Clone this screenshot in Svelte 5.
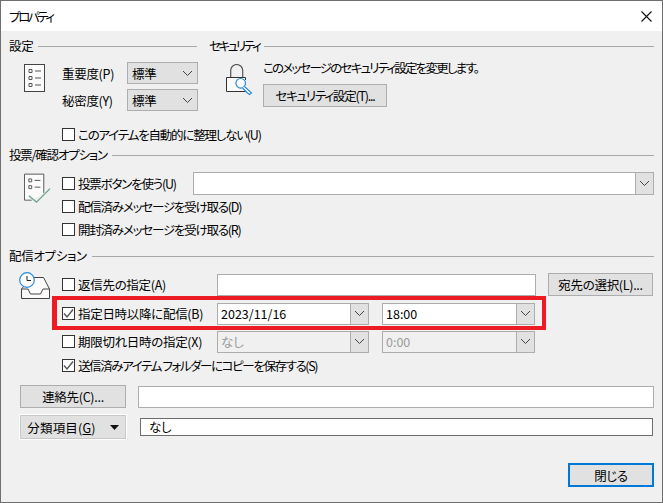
<script>
  let importance = "標準";
  let secrecy = "標準";
  let date = "2023/11/16";
  let time = "18:00";
</script>

{#snippet chevron()}
  <svg class="chev" width="11" height="7" viewBox="0 0 11 7">
    <path d="M1 1 L5.5 5.5 L10 1" fill="none" stroke="#444" stroke-width="1" />
  </svg>
{/snippet}

{#snippet checkbox(label, checked, tight)}
  <span class="check" class:on={checked}>
    <span class="box">
      {#if checked}
        <svg width="11" height="11" viewBox="0 0 11 11">
          <path d="M1 5.5 L4 9 L10 1.5" fill="none" stroke="#555" stroke-width="1.4" />
        </svg>
      {/if}
    </span>
    <span class="lbl {tight}">{label}</span>
  </span>
{/snippet}

{#snippet combo(text, width, disabled)}
  <div class="combo" class:disabled style="width:{width}px">
    <span class="combo-text">{text}</span>
    <span class="combo-arrow">{@render chevron()}</span>
  </div>
{/snippet}

<div class="dialog">
  <div class="titlebar">
    <span class="tight-4">プロパティ</span>
    <svg class="close" width="11" height="11" viewBox="0 0 11 11">
      <path d="M0.5 0.5 L10.5 10.5 M10.5 0.5 L0.5 10.5" stroke="#111" stroke-width="1.1" />
    </svg>
  </div>

  <div class="body">
    <div class="top">
      <section class="settings">
        <div class="heading"><span>設定</span><i></i></div>
        <div class="settings-body">
          <div class="icon-col">
            <svg class="list-icon" width="22" height="28" viewBox="0 0 22 28">
              <rect x="0.5" y="0.5" width="20" height="27" fill="#fbfbfb" stroke="#444" />
              <path d="M5 5.5h3v3h-3z M5 12.5h3v3h-3z M5 19.5h3v3h-3z" fill="none" stroke="#555" />
              <path d="M11 7h6 M11 14h6 M11 21h6" stroke="#555" />
            </svg>
          </div>
          <div class="selects">
            <div class="select-row">
              <span class="select-label">重要度(P)</span>
              <div class="select"><span>{importance}</span>{@render chevron()}</div>
            </div>
            <div class="select-row">
              <span class="select-label">秘密度(Y)</span>
              <div class="select"><span>{secrecy}</span>{@render chevron()}</div>
            </div>
          </div>
        </div>
      </section>
      <section class="security">
        <div class="heading"><span class="tight-4">セキュリティ</span><i></i></div>
        <div class="security-body">
          <svg class="lock" width="28" height="32" viewBox="0 0 28 32">
            <path d="M4.700 13 V6.500 a6 6 0 0 1 12 0 V13" fill="none" stroke="#555" stroke-width="1.2" />
            <path d="M19.500 27.500 H0.500 V13.500 H19.500 V16" fill="#fafafa" stroke="#333" />
            <circle cx="14.700" cy="19.300" r="4.800" fill="#fff" stroke="#2b88d8" stroke-width="1.2" />
            <path d="M18.500 22.500 L25.500 29 L23.500 30.500 L21.500 29 L20 27.500 L16.500 24" fill="#fff" stroke="#2b88d8" stroke-width="1.1" />
          </svg>
          <div class="security-text">
            <p class="tight-3">このメッセージのセキュリティ設定を変更します。</p>
            <button class="btn sec-btn"><span class="tight-1">セキュリティ設定(T)...</span></button>
          </div>
        </div>
      </section>
    </div>

    <div class="row auto-row">{@render checkbox("このアイテムを自動的に整理しない(U)", false, "tight-1")}</div>

    <section class="vote">
      <div class="heading"><span class="tight-1">投票/確認オプション</span><i></i></div>
      <div class="vote-body">
        <svg class="vote-icon" width="28" height="36" viewBox="0 0 28 36">
          <path d="M20.500 20 V0.500 H0.500 V27.500 H8" fill="#fbfbfb" stroke="#555" />
          <path d="M5 5.500h3v3h-3z M5 12.500h3v3h-3z" fill="none" stroke="#555" />
          <path d="M11 7h6 M11 14h6" stroke="#555" />
          <path d="M5 23 L13 29.500 L27 15.500" fill="none" stroke="#6fa287" stroke-width="1.3" />
        </svg>
        <div class="vote-rows">
          <div class="vote-first">
            {@render checkbox("投票ボタンを使う(U)", false, "tight-1")}
            <div class="combo wide">
              <span class="combo-text"></span>
              <span class="combo-arrow">{@render chevron()}</span>
            </div>
          </div>
          <div class="vote-row">{@render checkbox("配信済みメッセージを受け取る(D)", false, "tight-1")}</div>
          <div class="vote-row">{@render checkbox("開封済みメッセージを受け取る(R)", false, "tight-1")}</div>
        </div>
      </div>
    </section>

    <section class="delivery">
      <div class="heading"><span>配信オプション</span><i></i></div>
      <div class="delivery-body">
        <svg class="tray" width="32" height="30" viewBox="0 0 32 30">
          <path d="M6 14 L2.500 18 V27.500 H30.500 V18 L24.500 6.500 H13" fill="#fbfbfb" stroke="#444" />
          <path d="M2.500 18 H9 L11.500 23 H21.500 L24 18 H30.500" fill="none" stroke="#444" />
          <circle cx="8" cy="9" r="7.300" fill="#fff" stroke="#2b88d8" stroke-width="1.2" />
          <path d="M8 5 V9.500 H12" fill="none" stroke="#222" />
        </svg>
        <div class="delivery-rows">
          <div class="drow">
            <div class="dlabel">{@render checkbox("返信先の指定(A)", false, "")}</div>
            <div class="input reply"></div>
            <button class="btn addr-btn">宛先の選択(L)...</button>
          </div>
          <div class="drow second">
            <div class="dlabel">{@render checkbox("指定日時以降に配信(B)", true, "")}</div>
            {@render combo(date, 152, false)}
            {@render combo(time, 153, false)}
            <div class="redframe"></div>
          </div>
          <div class="drow third">
            <div class="dlabel">{@render checkbox("期限切れ日時の指定(X)", false, "")}</div>
            {@render combo("なし", 152, true)}
            {@render combo("0:00", 153, true)}
          </div>
          <div class="drow fourth">{@render checkbox("送信済みアイテム フォルダーにコピーを保存する(S)", true, "tight-2")}</div>
        </div>
      </div>
    </section>

    <div class="contacts">
      <button class="btn wide-btn">連絡先(C)...</button>
      <div class="input contact-input"></div>
    </div>
    <div class="category">
      <button class="btn wide-btn cat-btn">
        <span>分類項目(<u>G</u>)</span>
        <svg width="9" height="5" viewBox="0 0 9 5"><path d="M0 0 H9 L4.500 5 Z" fill="#111" /></svg>
      </button>
      <div class="cat-field">なし</div>
    </div>

    <div class="footer">
      <button class="btn close-btn">閉じる</button>
    </div>
  </div>
</div>

<style>
  :global(body) {
    margin: 0;
    background: #f0f0f0;
  }
  .dialog {
    width: 663px;
    height: 503px;
    box-sizing: border-box;
    border: 1px solid #6f6f6f;
    display: flex;
    flex-direction: column;
    font-family: "Noto Sans CJK JP", "Noto Sans", sans-serif;
    font-size: 12.5px;
    letter-spacing: -0.3px;
    font-feature-settings: "palt";
    color: #000;
    overflow: hidden;
  }
  .tight-1 {
    letter-spacing: -1.2px;
  }
  .tight-2 {
    letter-spacing: -1.4px;
  }
  .tight-3 {
    letter-spacing: -1.8px;
  }
  .tight-4 {
    letter-spacing: -2.4px;
  }
  .titlebar {
    height: 30px;
    flex: none;
    background: #fff;
    display: flex;
    align-items: center;
    justify-content: space-between;
    padding: 0 10px 0 8px;
  }
  .body {
    flex: 1;
    background: #f0f0f0;
    padding: 7px 8px 0;
  }
  .heading {
    display: flex;
    align-items: center;
    gap: 5px;
    height: 16px;
    line-height: 16px;
    white-space: nowrap;
  }
  .heading i {
    flex: 1;
    height: 1px;
    background: #a8a8a8;
  }
  .top {
    display: flex;
    gap: 12px;
    height: 75px;
  }
  .settings {
    width: 188px;
    flex: none;
  }
  .security {
    flex: 1;
  }
  .settings-body {
    display: flex;
    padding-top: 8px;
  }
  .icon-col {
    width: 53px;
    flex: none;
    padding: 2px 0 0 15px;
    box-sizing: border-box;
  }
  .list-icon {
    display: block;
  }
  .selects {
    display: flex;
    flex-direction: column;
    gap: 5px;
  }
  .select-row {
    display: flex;
    align-items: center;
  }
  .select-label {
    width: 65px;
  }
  .select {
    width: 71px;
    height: 22px;
    box-sizing: border-box;
    background: #e1e1e1;
    border: 1px solid #adadad;
    display: flex;
    align-items: center;
    justify-content: space-between;
    padding: 0 4px;
  }
  .security-body {
    display: flex;
    padding: 10px 0 0 17px;
  }
  .lock {
    flex: none;
    display: block;
  }
  .security-text {
    padding: 0 0 0 9px;
    margin-top: -4px;
  }
  .security-text p {
    margin: 0 0 8px;
    line-height: 16px;
  }
  .btn {
    font: inherit;
    font-feature-settings: inherit;
    letter-spacing: inherit;
    color: inherit;
    background: #e1e1e1;
    border: 1px solid #adadad;
    border-radius: 0;
    padding: 0;
    box-sizing: border-box;
    display: block;
  }
  .sec-btn {
    width: 124px;
    height: 23px;
  }
  .row {
    height: 20px;
    display: flex;
    align-items: center;
  }
  .auto-row {
    margin: 11px 0 0 53px;
  }
  .check {
    display: inline-flex;
    align-items: center;
    gap: 3px;
    white-space: nowrap;
  }
  .box {
    width: 13px;
    height: 13px;
    box-sizing: border-box;
    border: 1px solid #333;
    background: #fff;
    display: flex;
    align-items: center;
    justify-content: center;
    flex: none;
  }
  .vote {
    margin-top: 3px;
  }
  .vote-body {
    display: flex;
    padding-top: 9px;
  }
  .vote-icon {
    flex: none;
    margin: 1px 11px 0 15px;
    display: block;
    width: 27px;
  }
  .vote-rows {
    flex: 1;
  }
  .vote-first {
    display: flex;
    align-items: center;
    justify-content: space-between;
    height: 23px;
  }
  .vote-row {
    height: 23px;
    display: flex;
    align-items: center;
  }
  .combo {
    height: 22px;
    box-sizing: border-box;
    border: 1px solid #adadad;
    background: #fff;
    display: flex;
    align-items: stretch;
    flex: none;
  }
  .combo.wide {
    width: 461px;
    height: 23px;
  }
  .combo-text {
    flex: 1;
    padding-left: 3px;
    line-height: 20px;
    letter-spacing: 0;
  }
  .combo-arrow {
    width: 17px;
    background: #e1e1e1;
    border-left: 1px solid #adadad;
    display: flex;
    align-items: center;
    justify-content: center;
  }
  .combo.disabled {
    background: #f0f0f0;
    color: #9a9a9a;
  }
  .chev {
    display: block;
    flex: none;
  }
  .input {
    box-sizing: border-box;
    background: #fff;
    border: 1px solid #adadad;
  }
  .delivery {
    margin-top: 7px;
  }
  .delivery-body {
    display: flex;
    padding-top: 7px;
  }
  .tray {
    flex: none;
    display: block;
    margin: 0 11px 0 10px;
  }
  .delivery-rows {
    flex: 1;
    padding-top: 2px;
  }
  .drow {
    display: flex;
    align-items: center;
    height: 23px;
    position: relative;
    gap: 13px;
  }
  .dlabel {
    width: 155px;
    margin-right: -13px;
    flex: none;
  }
  .reply {
    width: 319px;
    height: 22px;
    margin-right: -1px;
  }
  .addr-btn {
    width: 105px;
    height: 23px;
  }
  .second {
    margin-top: 6px;
  }
  .third {
    margin-top: 5px;
  }
  .fourth {
    margin-top: 1px;
  }
  .redframe {
    position: absolute;
    left: -10px;
    top: -6px;
    width: 494px;
    height: 34px;
    box-sizing: border-box;
    border: 4px solid #ed1c24;
    border-left-width: 5px;
    pointer-events: none;
  }
  .contacts {
    display: flex;
    align-items: center;
    margin: 8px 0 0 11px;
    gap: 12px;
  }
  .wide-btn {
    width: 106px;
    height: 23px;
    flex: none;
  }
  .contact-input {
    width: 516px;
    height: 22px;
  }
  .category {
    display: flex;
    align-items: center;
    gap: 14px;
    margin: 7px 0 0 11px;
  }
  .cat-btn {
    display: flex;
    align-items: center;
    justify-content: center;
    gap: 14px;
    height: 24px;
    box-shadow: 0 0 0 1px #fff;
    border-color: #c8c8c8;
    letter-spacing: 0.2px;
  }
  .cat-field {
    width: 513px;
    height: 18px;
    line-height: 16px;
    box-sizing: border-box;
    border: 1px solid #6d6d6d;
    background: #fff;
    padding-left: 8px;
  }
  .footer {
    display: flex;
    justify-content: flex-end;
    margin-top: 24px;
  }
  .close-btn {
    width: 86px;
    height: 24px;
    border: 2px solid #0078d7;
  }
</style>
